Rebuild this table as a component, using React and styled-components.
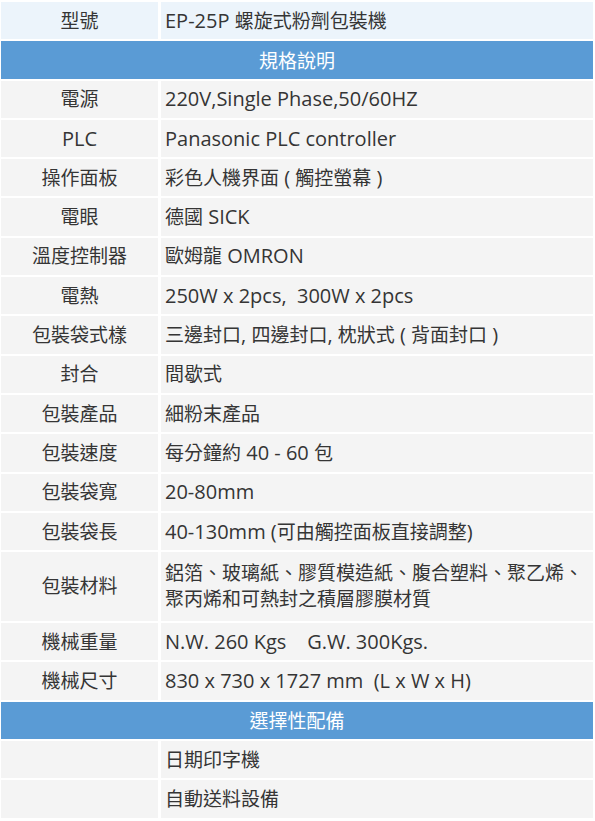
import React from "react";
import styled, { createGlobalStyle } from "styled-components";

const GlobalStyle = createGlobalStyle`
  html, body {
    margin: 0;
    padding: 0;
    background: #ffffff;
  }
  body {
    font-family: "Open Sans", "Noto Sans CJK TC", sans-serif;
    color: #353535;
  }
`;

const specs = [
  { label: "電源", value: "220V,Single Phase,50/60HZ" },
  { label: "PLC", value: "Panasonic PLC controller" },
  { label: "操作面板", value: "彩色人機界面 ( 觸控螢幕 )" },
  { label: "電眼", value: "德國 SICK" },
  { label: "溫度控制器", value: "歐姆龍 OMRON" },
  { label: "電熱", value: "250W x 2pcs,  300W x 2pcs" },
  { label: "包裝袋式樣", value: "三邊封口, 四邊封口, 枕狀式 ( 背面封口 )" },
  { label: "封合", value: "間歇式" },
  { label: "包裝產品", value: "細粉末產品" },
  { label: "包裝速度", value: "每分鐘約 40 - 60 包" },
  { label: "包裝袋寬", value: "20-80mm" },
  { label: "包裝袋長", value: "40-130mm (可由觸控面板直接調整)" },
  {
    label: "包裝材料",
    value: "鋁箔、玻璃紙、膠質模造紙、腹合塑料、聚乙烯、聚丙烯和可熱封之積層膠膜材質",
    tall: true,
  },
  { label: "機械重量", value: "N.W. 260 Kgs    G.W. 300Kgs." },
  { label: "機械尺寸", value: "830 x 730 x 1727 mm  (L x W x H)" },
];

const options = ["日期印字機", "自動送料設備"];

// Latin runs are set a touch larger than the Chinese runs, like the source font pairing
const hanRun = /([\u2e80-\u9fff\u3000-\u303f\uff00-\uffef]+)/;

function Mixed({ text }) {
  if (!text) return null;
  return text.split(hanRun).map((part, i) =>
    i % 2 === 1 ? <Han key={i}>{part}</Han> : part
  );
}

export default function App() {
  return (
    <>
      <GlobalStyle />
      <Sheet>
        <Label $tone="model"><Mixed text="型號" /></Label>
        <Value $tone="model"><Mixed text="EP-25P 螺旋式粉劑包裝機" /></Value>

        <SectionHeader><Mixed text="規格說明" /></SectionHeader>
        {specs.map((row) => (
          <React.Fragment key={row.label}>
            <Label $tall={row.tall}><Mixed text={row.label} /></Label>
            <Value $tall={row.tall}><Mixed text={row.value} /></Value>
          </React.Fragment>
        ))}

        <SectionHeader><Mixed text="選擇性配備" /></SectionHeader>
        {options.map((item) => (
          <React.Fragment key={item}>
            <Label />
            <Value><Mixed text={item} /></Value>
          </React.Fragment>
        ))}
      </Sheet>
    </>
  );
}

const Sheet = styled.div`
  width: 595px;
  box-sizing: border-box;
  padding: 2px 2px 2px 1px;
  display: grid;
  grid-template-columns: 157px 1fr;
  column-gap: 3px;
  row-gap: 2px;
  font-size: 20px;
`;

const Han = styled.span`
  font-size: 19px;
`;

const Cell = styled.div`
  box-sizing: border-box;
  min-height: ${(p) => (p.$tall ? "69px" : "37.3px")};
  background: ${(p) => (p.$tone === "model" ? "#ecf4fb" : "#f4f4f4")};
  line-height: ${(p) => (p.$tall ? "25.5px" : "24px")};
  white-space: pre-wrap;
  display: flex;
  align-items: center;
`;

const Label = styled(Cell)`
  justify-content: center;
  text-align: center;
`;

const Value = styled(Cell)`
  padding: 0 6px 0 4px;
`;

const SectionHeader = styled.div`
  grid-column: 1 / -1;
  height: 37.3px;
  display: flex;
  align-items: center;
  justify-content: center;
  background: #5a9bd5;
  color: #ffffff;
`;
